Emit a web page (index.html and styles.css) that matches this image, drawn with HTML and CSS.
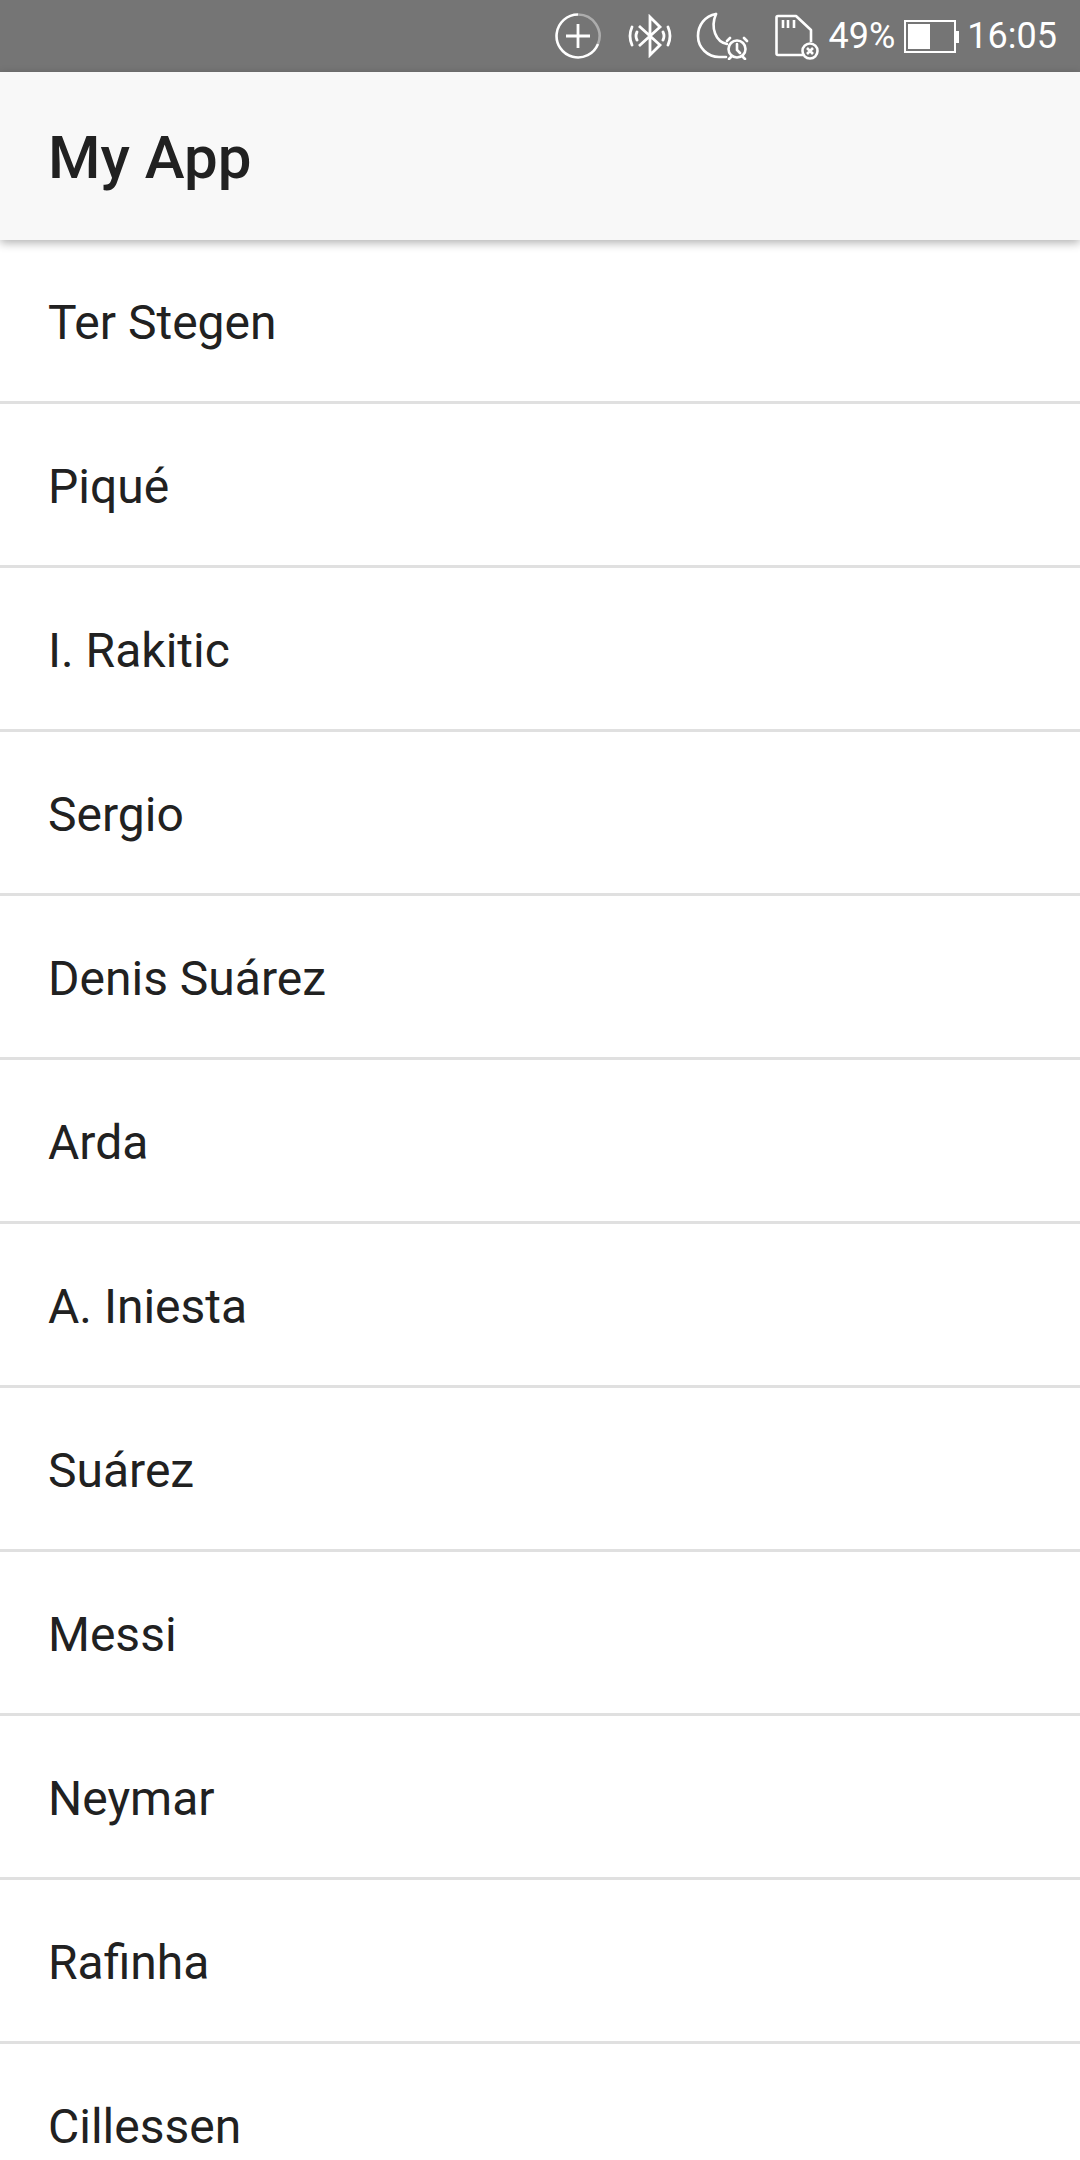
FILE: index.html

```html
<!DOCTYPE html>
<html lang="en">
<head>
    <meta charset="UTF-8">
    <title>My App</title>
    <link rel="stylesheet" href="styles.css">
</head>
<body>
    <div class="status-bar">
        <svg class="icon icon-data" width="48" height="48" viewBox="0 0 48 48" fill="none" stroke="#fff" stroke-width="2.600">
            <path d="M24 2.500a21.500 21.500 0 1 0 20 29.500"/>
            <path d="M24 2.500a21.500 21.500 0 0 1 20 29.500" stroke-opacity="0.4"/>
            <path d="M24 12v24M12 24h24" stroke-width="2.800"/>
        </svg>
        <svg class="icon icon-bt" width="46" height="44" viewBox="0 0 46 44" fill="none" stroke="#fff" stroke-width="2.800">
            <path d="M12 12l21 19l-10 10V3l10 10l-21 19"/>
            <path d="M5 13q-4 9 0 18M10 18q-2 4 0 8M41 13q4 9 0 18M36 18q2 4 0 8" stroke-linecap="round"/>
        </svg>
        <svg class="icon icon-dnd" width="56" height="48" viewBox="0 0 56 48" fill="none" stroke="#fff" stroke-width="2.600">
            <path d="M20 2C9 4 2 13 2 24c0 12 10 21 21 21h7" stroke-linecap="round"/>
            <path d="M20 2c-6 14 0 28 11 30" stroke-linecap="round"/>
            <circle cx="41" cy="37" r="8.500"/>
            <path d="M41 32v6l3 3M34 26l-3 3M48 26l3 3M35 45l-2 2M47 45l2 2" stroke-linecap="round"/>
        </svg>
        <svg class="icon icon-sd" width="46" height="48" viewBox="0 0 46 48" fill="none" stroke="#fff" stroke-width="2.600">
            <path d="M28 43H3q-1.500 0-1.500-1.500V5.500Q1.500 4 3 4h18l15 14v12" stroke-linejoin="round"/>
            <path d="M8 8v8M13 8v8M19 8v8"/>
            <circle cx="35" cy="39" r="7.500"/>
            <path d="M32 36l6 6M38 36l-6 6"/>
        </svg>
        <span class="status-text pct">49%</span>
        <svg class="icon icon-battery" width="55" height="33" viewBox="0 0 55 33" fill="none">
            <rect x="1" y="1" width="50" height="31" stroke="#fff" stroke-width="2"/>
            <rect x="4" y="4" width="22" height="25" fill="#fff"/>
            <rect x="51" y="11" width="4" height="12" fill="#fff"/>
        </svg>
        <span class="status-text clock">16:05</span>
    </div>

    <div class="app-bar">
        <h1>My App</h1>
    </div>

    <ul class="list">
        <li>Ter Stegen</li>
        <li>Piqué</li>
        <li>I. Rakitic</li>
        <li>Sergio</li>
        <li>Denis Suárez</li>
        <li>Arda</li>
        <li>A. Iniesta</li>
        <li>Suárez</li>
        <li>Messi</li>
        <li>Neymar</li>
        <li>Rafinha</li>
        <li>Cillessen</li>
    </ul>
</body>
</html>
```

FILE: styles.css

```css
html, body {
    height: 2160px;
    overflow: hidden;
}

body {
    margin: 0;
    font-family: Roboto, sans-serif;
    background: #fff;
    color: #212121;
}

.status-bar {
    height: 72px;
    background: #757575;
    display: flex;
    align-items: center;
    justify-content: flex-end;
    padding-right: 23px;
    box-sizing: border-box;
}

.icon {
    display: block;
    flex: none;
}

.icon-bt {
    margin-left: 25px;
}

.icon-dnd {
    margin-left: 23px;
}

.icon-sd {
    margin-left: 23px;
}

.status-text {
    color: #fff;
    font-size: 36px;
    line-height: 72px;
}

.pct {
    margin-left: 8px;
}

.icon-battery {
    margin-left: 9px;
}

.clock {
    margin-left: 8px;
}

.app-bar {
    position: relative;
    z-index: 1;
    height: 168px;
    background: #f8f8f8;
    display: flex;
    align-items: center;
    padding: 2px 0 0 48px;
    box-sizing: border-box;
    box-shadow: 0 3px 9px rgba(0,0,0,0.3);
}

.app-bar h1 {
    margin: 0;
    font-size: 60px;
    font-weight: 500;
}

.list {
    margin: 0;
    padding: 0;
    list-style: none;
}

.list li {
    height: 164px;
    box-sizing: border-box;
    border-bottom: 3px solid #e0e0e0;
    display: flex;
    align-items: center;
    padding: 3px 0 0 48px;
    font-size: 48px;
}
```
